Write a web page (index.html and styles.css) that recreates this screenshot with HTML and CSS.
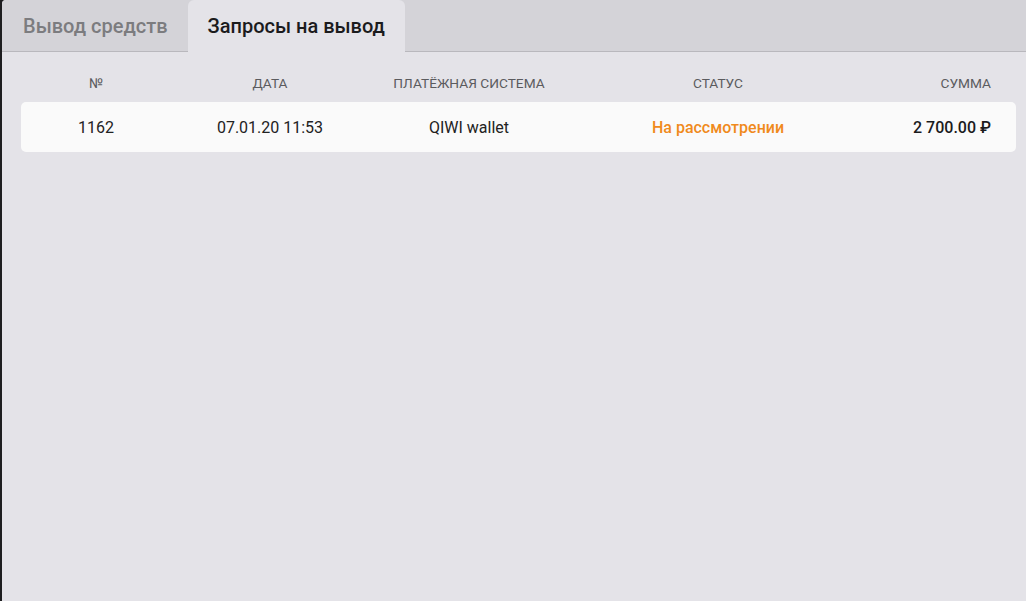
FILE: index.html
```html
<!DOCTYPE html>
<html lang="ru">

<head>
    <meta charset="UTF-8">
    <meta name="viewport" content="width=device-width, initial-scale=1.0">
    <title>Запросы на вывод</title>
    <link rel="stylesheet" href="styles.css">
</head>

<body>
    <div class="panel">
        <div class="tabs">
            <div class="tab">Вывод средств</div>
            <div class="tab active">Запросы на вывод</div>
        </div>

        <div class="requests">
            <div class="row head">
                <div class="cell">№</div>
                <div class="cell">Дата</div>
                <div class="cell">Платёжная система</div>
                <div class="cell">Статус</div>
                <div class="cell sum">Сумма</div>
            </div>
            <div class="row item">
                <div class="cell">1162</div>
                <div class="cell">07.01.20 11:53</div>
                <div class="cell">QIWI wallet</div>
                <div class="cell status">На рассмотрении</div>
                <div class="cell sum">2 700.00 ₽</div>
            </div>
        </div>
    </div>
</body>

</html>
```

FILE: styles.css
```css
html,
body {
    height: 100%;
}

body {
    margin: 0;
    background: #1e1e20;
    font-family: Roboto, "Noto Sans", sans-serif;
    color: #222;
}

.panel {
    height: 100%;
    margin-left: 2px;
    background: #e4e3e8;
    border-radius: 4px 0 0 0;
    overflow: hidden;
}

.tabs {
    display: flex;
    height: 51px;
    background: #d4d3d8;
    border-bottom: 1px solid #b9b8bd;
}

.tab {
    display: flex;
    align-items: center;
    padding: 0 20px 0 21px;
    font-size: 20px;
    font-weight: 500;
    color: #7c7c7f;
}

.tab.active {
    margin-bottom: -1px;
    padding: 0 20px;
    background: #e4e3e8;
    border-radius: 6px 6px 0 0;
    color: #1b1b1d;
}

.requests {
    padding: 20px 10px 0 19px;
}

.row {
    display: grid;
    grid-template-columns: 150px 198px 200px 298px 1fr;
    align-items: center;
}

.cell {
    text-align: center;
}

.cell.sum {
    text-align: right;
    padding-right: 25px;
}

.head {
    height: 22px;
    margin-bottom: 8px;
    font-size: 13.7px;
    color: #5b5b5e;
    text-transform: uppercase;
}

.item {
    height: 50px;
    background: #fafafa;
    border-radius: 5px;
    font-size: 16px;
}

.status {
    color: #f08a1c;
    font-weight: 500;
}

.item .sum {
    font-weight: 500;
    color: #1b1b1d;
}
```
